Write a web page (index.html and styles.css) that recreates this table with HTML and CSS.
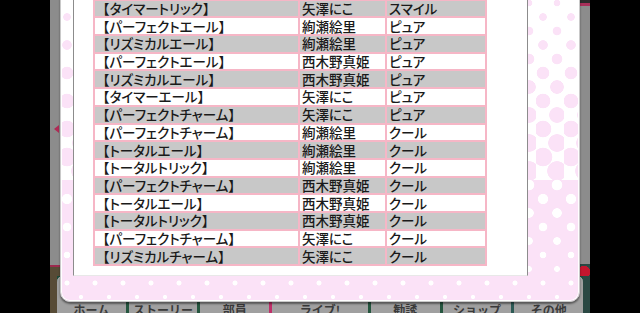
FILE: index.html
```html
<!DOCTYPE html>
<html lang="ja">
<head>
<meta charset="utf-8">
<title>メンバー一覧</title>
<link rel="stylesheet" href="styles.css">
</head>
<body>
<div class="screen">
  <div class="game">
    <div class="stage"><span class="stage-arrow"></span></div>
    <nav class="nav">
      <div class="tab">ホーム</div>
      <div class="tab">ストーリー</div>
      <div class="tab">部員</div>
      <div class="tab tab-live">ライブ!</div>
      <div class="tab">勧誘</div>
      <div class="tab">ショップ</div>
      <div class="tab tab-last">その他</div>
    </nav>
  </div>
  <div class="modal">
    <div class="sheet">
      <table class="list">
        <colgroup><col class="c-skill"><col class="c-name"><col class="c-attr"></colgroup>
        <tbody>
          <tr><td><span class="br">【</span>タイマートリック<span class="br">】</span></td><td>矢澤にこ</td><td>スマイル</td></tr>
          <tr><td><span class="br">【</span>パーフェクトエール<span class="br">】</span></td><td>絢瀬絵里</td><td>ピュア</td></tr>
          <tr><td><span class="br">【</span>リズミカルエール<span class="br">】</span></td><td>絢瀬絵里</td><td>ピュア</td></tr>
          <tr><td><span class="br">【</span>パーフェクトエール<span class="br">】</span></td><td>西木野真姫</td><td>ピュア</td></tr>
          <tr><td><span class="br">【</span>リズミカルエール<span class="br">】</span></td><td>西木野真姫</td><td>ピュア</td></tr>
          <tr><td><span class="br">【</span>タイマーエール<span class="br">】</span></td><td>矢澤にこ</td><td>ピュア</td></tr>
          <tr><td><span class="br">【</span>パーフェクトチャーム<span class="br">】</span></td><td>矢澤にこ</td><td>ピュア</td></tr>
          <tr><td><span class="br">【</span>パーフェクトチャーム<span class="br">】</span></td><td>絢瀬絵里</td><td>クール</td></tr>
          <tr><td><span class="br">【</span>トータルエール<span class="br">】</span></td><td>絢瀬絵里</td><td>クール</td></tr>
          <tr><td><span class="br">【</span>トータルトリック<span class="br">】</span></td><td>絢瀬絵里</td><td>クール</td></tr>
          <tr><td><span class="br">【</span>パーフェクトチャーム<span class="br">】</span></td><td>西木野真姫</td><td>クール</td></tr>
          <tr><td><span class="br">【</span>トータルエール<span class="br">】</span></td><td>西木野真姫</td><td>クール</td></tr>
          <tr><td><span class="br">【</span>トータルトリック<span class="br">】</span></td><td>西木野真姫</td><td>クール</td></tr>
          <tr><td><span class="br">【</span>パーフェクトチャーム<span class="br">】</span></td><td>矢澤にこ</td><td>クール</td></tr>
          <tr><td><span class="br">【</span>リズミカルチャーム<span class="br">】</span></td><td>矢澤にこ</td><td>クール</td></tr>
        </tbody>
      </table>
    </div>
  </div>
</div>
</body>
</html>
```
FILE: styles.css
```css
html, body {
  margin: 0;
  padding: 0;
  background: #000;
}
body {
  width: 640px;
  height: 313px;
  overflow: hidden;
  font-family: "Noto Sans CJK JP", "Noto Sans", sans-serif;
}
.screen {
  position: relative;
  width: 540px;
  height: 313px;
  margin: 0 auto;
  overflow: hidden;
}
.game {
  display: flex;
  flex-direction: column;
  height: 100%;
}
.stage {
  flex: 1;
  position: relative;
  background-color: #8c8c8c;
  background-image:
    radial-gradient(circle at 6px 272px, #c4162e 6px, transparent 6.5px),
    linear-gradient(to bottom, #2b2b2b 0 3px, #a8305a 3px 6px, transparent 6px 264px, #2a4843 264px),
    linear-gradient(to bottom, transparent 0 265px, #9c2a4e 265px 267px, #574b36 267px);
  background-size: 12px 100%, 12px 100%, 12px 100%;
  background-position: right top, right top, left top;
  background-repeat: no-repeat;
}
.stage-arrow {
  position: absolute;
  left: 4px;
  top: 125px;
  width: 0;
  height: 0;
  border-top: 4px solid transparent;
  border-bottom: 4px solid transparent;
  border-right: 5px solid #b02a55;
}
.nav {
  height: 37px;
  display: flex;
  padding: 0 7px;
  background: linear-gradient(to right, #574b36 0 7px, #1f4a3a 7px calc(100% - 7px), #2a4843 calc(100% - 7px));
}
.tab {
  flex: 1;
  box-sizing: border-box;
  background: #a0a0a0;
  border-top: 1px solid #cfcfcf;
  border-radius: 6px 6px 0 0;
  text-align: center;
  padding-top: 24px;
  font-size: 12px;
  font-weight: bold;
  line-height: 17px;
  color: #3a3a3a;
}
.tab + .tab {
  border-left: 3px solid #25563f;
}
.tab-live {
  flex: 0 0 99px;
}
.tab + .tab-live {
  border-left-color: #c0306a;
}
.tab + .tab-last {
  border-left-color: #2c5a55;
}
.modal {
  position: absolute;
  left: 10px;
  top: -12px;
  width: 520px;
  height: 314px;
  box-sizing: border-box;
  border: 1px solid #c9c9c9;
  border-radius: 10px;
  box-shadow: inset 0 0 0 1px #fff, 0 2px 2px rgba(0, 0, 0, 0.45);
  padding: 0 51px 25px 12px;
  display: flex;
  flex-direction: column;
  background-color: #fff;
  background-origin: border-box;
  background-image:
    radial-gradient(circle at 21px 14px, #fff 5px, transparent 5.6px),
    radial-gradient(circle at 7px 14px, #fff 4.8px, transparent 5.4px),
    radial-gradient(circle at 21px 14px, #fff 4.5px, transparent 5.1px),
    radial-gradient(circle at 7px 14px, #fff 4px, transparent 4.6px),
    radial-gradient(circle at 21px 14px, #fff 3.5px, transparent 4.1px),
    radial-gradient(circle at 7px 14px, #fff 3px, transparent 3.6px),
    radial-gradient(circle at 21px 14px, #fff 2.6px, transparent 3.2px),
    radial-gradient(circle at 7px 14px, #fff 2.2px, transparent 2.8px),
    radial-gradient(circle at 21px 14px, #fff 1.8px, transparent 2.4px),
    linear-gradient(#fbe2f7, #fbe2f7),
    radial-gradient(circle at 21px 14px, #fbe2f7 3px, transparent 3.6px),
    radial-gradient(circle at 7px 14px, #fbe2f7 3.5px, transparent 4.1px),
    radial-gradient(circle at 21px 14px, #fbe2f7 4px, transparent 4.6px),
    radial-gradient(circle at 7px 14px, #fbe2f7 4.5px, transparent 5.1px),
    radial-gradient(circle at 21px 14px, #fbe2f7 5px, transparent 5.6px),
    radial-gradient(circle at 7px 14px, #fbe2f7 6px, transparent 6.6px),
    radial-gradient(circle at 21px 14px, #fbe2f7 6.5px, transparent 7.1px),
    radial-gradient(circle at 7px 14px, #fbe2f7 7px, transparent 7.6px),
    radial-gradient(circle at 21px 14px, #fbe2f7 7.5px, transparent 8.1px),
    radial-gradient(circle at 7px 14px, #fbe2f7 8px, transparent 8.6px),
    radial-gradient(circle at 21px 14px, #fbe2f7 8.5px, transparent 9.1px),
    radial-gradient(circle at 7px 14px, #fbe2f7 9px, transparent 9.6px),
    radial-gradient(circle at 21px 14px, #fbe2f7 9.5px, transparent 10.1px);
  background-position:
    0 183px, 0 197px, 0 211px, 0 225px, 0 239px, 0 253px, 0 267px, 0 281px, 0 295px,
    0 192px,
    0 1px, 0 15px, 0 29px, 0 43px, 0 57px, 0 71px, 0 85px, 0 99px, 0 113px, 0 127px, 0 141px, 0 155px, 0 169px;
  background-size:
    28px 28px, 28px 28px, 28px 28px, 28px 28px, 28px 28px, 28px 28px, 28px 28px, 28px 28px, 28px 28px,
    100% 100%,
    28px 28px, 28px 28px, 28px 28px, 28px 28px, 28px 28px, 28px 28px, 28px 28px, 28px 28px, 28px 28px, 28px 28px, 28px 28px, 28px 28px, 28px 28px;
  background-repeat:
    repeat-x, repeat-x, repeat-x, repeat-x, repeat-x, repeat-x, repeat-x, repeat-x, repeat-x,
    no-repeat,
    repeat-x, repeat-x, repeat-x, repeat-x, repeat-x, repeat-x, repeat-x, repeat-x, repeat-x, repeat-x, repeat-x, repeat-x, repeat-x;
}
.sheet {
  flex: 1;
  box-sizing: border-box;
  background: #fff;
  border-left: 1px solid #8c8c8c;
  border-right: 1px solid #8c8c8c;
  border-bottom: 1px solid #e8e8e8;
  display: flex;
  flex-direction: column;
  justify-content: flex-end;
  padding: 0 0 9px 19px;
  overflow: hidden;
}
.list {
  width: 392px;
  border-collapse: collapse;
  table-layout: fixed;
  font-size: 13.5px;
  font-weight: 500;
  line-height: 15px;
  color: #1a1a1a;
  font-feature-settings: "palt";
}
.c-skill { width: 205px; }
.c-name { width: 87px; }
.c-attr { width: 100px; }
.list tr {
  height: 17.7px;
}
.list tr:nth-child(odd) {
  background: #c8c8c8;
}
.list td {
  border: 2px solid #f6b6c6;
  padding: 0 0 0 2px;
  white-space: nowrap;
  overflow: hidden;
}
.list td:first-child {
  padding-left: 1px;
}
.br {
  font-feature-settings: normal;
}
```
